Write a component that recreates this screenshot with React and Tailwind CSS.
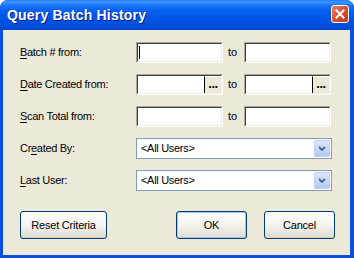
import React from 'react';

const font = { fontFamily: '"Liberation Sans", Arial, sans-serif' };

function Mn({ text, idx }) {
  return (
    <>
      {text.slice(0, idx)}
      <span className="underline underline-offset-[2px]">{text[idx]}</span>
      {text.slice(idx + 1)}
    </>
  );
}

function TextBox({ caret, browse }) {
  return (
    <div className="h-[21px] w-[87px] border border-t-[#aca899] border-l-[#aca899] border-b-white border-r-white">
      <div className="flex h-full w-full border border-t-[#3f3d33] border-l-[#3f3d33] border-b-[#f1efe2] border-r-[#f1efe2] bg-white">
        <div className="flex flex-1 items-center pl-[1px]">
          {caret && <div className="h-[13px] w-[1px] bg-black" />}
        </div>
        {browse && (
          <div className="flex w-[17px] items-center justify-center border-l border-l-black border-t border-t-white bg-[#ece9d8] pb-[4px] text-[13px] font-bold leading-none tracking-[-0.5px] text-black">
            ...
          </div>
        )}
      </div>
    </div>
  );
}

function Combo() {
  return (
    <div className="flex h-[21px] w-[196px] items-center border border-[#7f9db9] bg-white p-[1px]">
      <div className="flex-1 pl-[3px] text-[11px] tracking-[-0.3px] text-black">&lt;All Users&gt;</div>
      <div className="flex h-[17px] w-[16px] items-center justify-center rounded-[2px] border border-[#bccff5] bg-gradient-to-b from-[#dbe6fe] to-[#b3c9f5]">
        <svg width="8" height="5" viewBox="0 0 8 5">
          <path d="M1 1 L4 4 L7 1" fill="none" stroke="#4d6185" strokeWidth="1.8" />
        </svg>
      </div>
    </div>
  );
}

function Btn({ children, w, def }) {
  return (
    <div
      className={`flex h-[28px] ${w} items-center justify-center rounded-[3px] border border-[#003c74] bg-gradient-to-b from-white via-[#f4f3ee] to-[#dedbcf] text-[11px] tracking-[-0.2px] text-black ${def ? 'shadow-[inset_0_0_0_1px_#a8c3ed]' : 'shadow-[inset_0_-1px_0_#d6d0c5]'}`}
    >
      {children}
    </div>
  );
}

function Row({ label, children }) {
  return (
    <div className="flex h-[21px] items-center">
      <div className="w-[116px] text-[11px] tracking-[-0.3px] text-black">{label}</div>
      {children}
    </div>
  );
}

function RangeRow({ label, caret, browse }) {
  return (
    <Row label={label}>
      <TextBox caret={caret} browse={browse} />
      <div className="w-[21px] pl-[5px] text-[11px] text-black">to</div>
      <TextBox browse={browse} />
    </Row>
  );
}

export default function App() {
  return (
    <div style={font} className="flex h-[258px] w-[354px] flex-col overflow-hidden rounded-t-[8px] bg-[#0b4fe0]">
      <div className="flex h-[30px] shrink-0 items-center justify-between bg-[linear-gradient(to_bottom,#2a7ef8_0%,#3d95ff_8%,#1a73f8_18%,#0860ee_35%,#0055e5_60%,#0050dc_85%,#0046cf_100%)] pl-[7px] pr-[5px]">
        <span className="text-[14px] font-bold tracking-[0.2px] text-white [text-shadow:1px_1px_#0a1a8c]">Query Batch History</span>
        <div className="mb-[2px] flex h-[18px] w-[18px] items-center justify-center rounded-[3px] border border-white bg-gradient-to-br from-[#e8846a] via-[#d9502e] to-[#c23a1c]">
          <svg width="10" height="10" viewBox="0 0 10 10">
            <path d="M1.5 1.5 L8.5 8.5 M8.5 1.5 L1.5 8.5" stroke="white" strokeWidth="2" strokeLinecap="square" />
          </svg>
        </div>
      </div>
      <div className="mb-[3px] ml-[3px] mr-[4px] flex-1 bg-[#ece9d8] pl-[17px] pt-[12px]">
        <div className="flex flex-col gap-[11px]">
          <RangeRow label={<Mn text="Batch # from:" idx={0} />} caret />
          <RangeRow label={<Mn text="Date Created from:" idx={0} />} browse />
          <RangeRow label={<Mn text="Scan Total from:" idx={0} />} />
          <Row label={<Mn text="Created By:" idx={2} />}>
            <Combo />
          </Row>
          <Row label={<Mn text="Last User:" idx={0} />}>
            <Combo />
          </Row>
        </div>
        <div className="mt-[20px] flex">
          <Btn w="w-[87px]">Reset Criteria</Btn>
          <div className="w-[69px]" />
          <Btn w="w-[71px]" def>OK</Btn>
          <div className="w-[17px]" />
          <Btn w="w-[71px]">Cancel</Btn>
        </div>
      </div>
    </div>
  );
}
